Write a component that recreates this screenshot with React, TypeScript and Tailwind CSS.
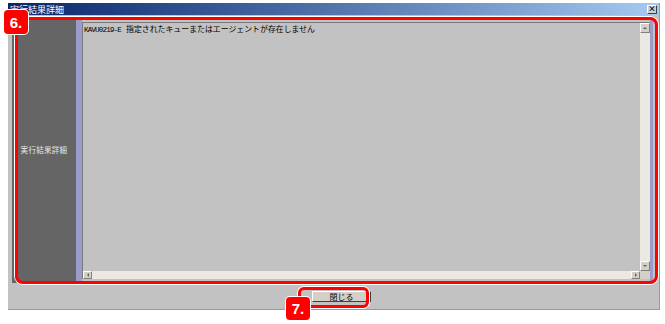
import React from "react";

const jp = { fontFamily: '"Noto Sans CJK JP", "Noto Sans", sans-serif' };

export default function App() {
  return (
    <div className="relative w-[665px] h-[324px] bg-white overflow-hidden" style={jp}>
      <div className="pt-[3px] pl-[8px]">
        <div className="w-[652px] h-[307px] bg-[#c2c2c2] flex flex-col border-r border-b border-[#9a9a9a]">
          {/* title bar */}
          <div className="h-[12px] flex items-center justify-between bg-gradient-to-r from-[#0a246a] to-[#a6caf0] pl-[2px] pr-[2px]">
            <span className="text-[9px] leading-none text-white">実行結果詳細</span>
            <div className="w-[10px] h-[9px] bg-[#d4d0c8] border-t border-l border-white border-r border-b border-r-[#404040] border-b-[#404040] flex items-center justify-center text-[8px] leading-none font-bold text-black">
              ×
            </div>
          </div>
          {/* content row */}
          <div className="pt-[2px] pl-[4px] flex h-[268px]">
            <div className="w-[64px] h-[266px] bg-[#656565] flex items-center justify-center">
              <span className="text-[7.5px] leading-none text-[#e6e6e6] tracking-[0.3px]">実行結果詳細</span>
            </div>
            <div className="w-[577px] h-[266px] bg-[#c2c2c2] border-l-[6px] border-r-[3px] border-[#9c9ccc] pt-[5px] pb-[4px]">
              <div className="h-full flex flex-col border-t border-l border-[#7a7a7a]">
                <div className="flex flex-1 min-h-0">
                  <div className="flex-1 pl-[1px] pt-[2px]">
                    <div className="flex items-baseline text-black leading-none">
                      <span className="text-[7.5px] tracking-[-0.8px]" style={{ fontFamily: '"Liberation Mono", monospace' }}>KAVU0219-E</span>
                      <span className="text-[7.9px] ml-[5px]">指定されたキューまたはエージェントが存在しません</span>
                    </div>
                  </div>
                  <div className="w-[10px] bg-[#ebe9e2] flex flex-col justify-between">
                    <div className="h-[10px] bg-[#d4d0c8] border-t border-l border-white border-r border-b border-r-[#808080] border-b-[#808080] flex items-center justify-center">
                      <div className="w-0 h-0 border-l-[2px] border-r-[2px] border-b-[2px] border-l-transparent border-r-transparent border-b-[#606060]" />
                    </div>
                    <div className="h-[10px] bg-[#d4d0c8] border-t border-l border-white border-r border-b border-r-[#808080] border-b-[#808080] flex items-center justify-center">
                      <div className="w-0 h-0 border-l-[2px] border-r-[2px] border-t-[2px] border-l-transparent border-r-transparent border-t-[#606060]" />
                    </div>
                  </div>
                </div>
                <div className="h-[8px] flex">
                  <div className="flex-1 bg-[#ebe9e2] flex justify-between">
                    <div className="w-[9px] bg-[#d4d0c8] border-t border-l border-white border-r border-b border-r-[#808080] border-b-[#808080] flex items-center justify-center">
                      <div className="w-0 h-0 border-t-[2px] border-b-[2px] border-r-[2px] border-t-transparent border-b-transparent border-r-[#606060]" />
                    </div>
                    <div className="w-[9px] bg-[#d4d0c8] border-t border-l border-white border-r border-b border-r-[#808080] border-b-[#808080] flex items-center justify-center">
                      <div className="w-0 h-0 border-t-[2px] border-b-[2px] border-l-[2px] border-t-transparent border-b-transparent border-l-[#606060]" />
                    </div>
                  </div>
                  <div className="w-[10px] bg-[#d4d0c8]" />
                </div>
              </div>
            </div>
          </div>
          {/* button row */}
          <div className="flex justify-center pt-[8px] pl-[16px]">
            <div className="w-[59px] h-[11px] bg-[#d4d0c8] border-t border-l border-white border-r border-b border-r-[#404040] border-b-[#404040] flex items-center justify-center">
              <span className="text-[8px] leading-none text-black">閉じる</span>
            </div>
          </div>
        </div>
      </div>

      {/* annotation overlays */}
      <div className="absolute left-[15px] top-[17px] w-[643px] h-[267px] border-[3px] border-[#ff0000] rounded-[8px] shadow-[0_0_0_1px_#ffffff]" />
      <div className="absolute left-[4px] top-[10px] w-[24px] h-[24px] bg-[#ff0000] rounded-[4px] shadow-[0_0_0_1px_#ffffff] flex items-center justify-center">
        <span className="text-white text-[15px] font-bold leading-none" style={{ fontFamily: '"Liberation Sans", Arial, sans-serif' }}>6.</span>
      </div>
      <div className="absolute left-[298px] top-[287px] w-[71px] h-[21px] border-[3px] border-[#ff0000] rounded-[6px] shadow-[0_0_0_1px_#ffffff]" />
      <div className="absolute left-[286px] top-[297px] w-[24px] h-[23px] bg-[#ff0000] rounded-[4px] shadow-[0_0_0_1px_#ffffff] flex items-center justify-center">
        <span className="text-white text-[15px] font-bold leading-none" style={{ fontFamily: '"Liberation Sans", Arial, sans-serif' }}>7.</span>
      </div>
    </div>
  );
}
